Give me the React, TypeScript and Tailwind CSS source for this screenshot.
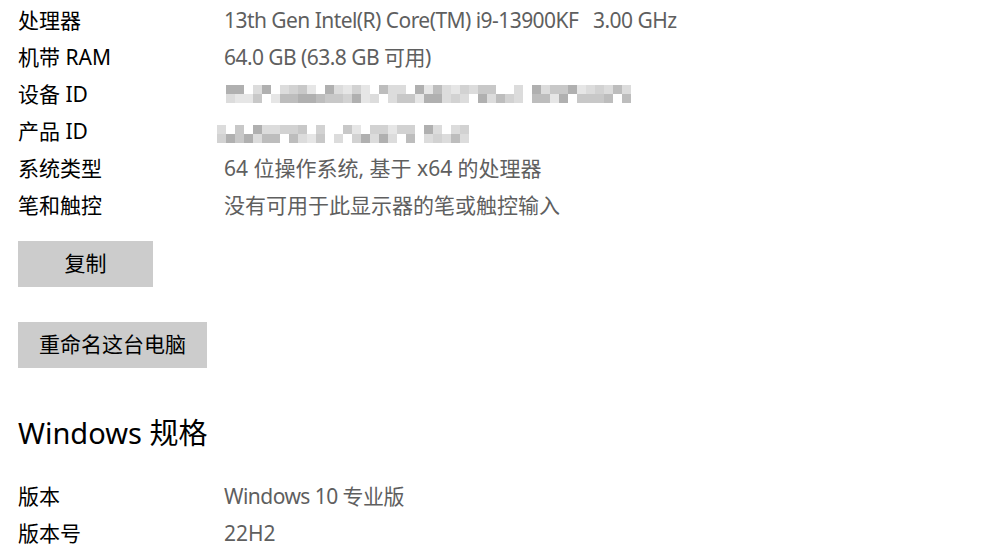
const FONT = { fontFamily: '"Noto Sans", "Noto Sans CJK SC", sans-serif' };

const SHADES = [
  "bg-[#f4f4f4]",
  "bg-[#e6e6e6]",
  "bg-[#dcdcdc]",
  "bg-[#d2d2d2]",
  "bg-[#c8c8c8]",
  "bg-[#bdbdbd]",
  "bg-[#b0b0b0]",
  "bg-[#a5a5a5]",
  "bg-white",
];

// pixelated (blurred) id values
function Mosaic({ cols, seed }: { cols: number; seed: number }) {
  const cells: string[] = [];
  let s = seed;
  for (let i = 0; i < cols * 2; i++) {
    s = (s * 9301 + 49297) % 233280;
    const r = s / 233280;
    const idx = r < 0.18 ? 8 : Math.floor(r * 7);
    cells.push(SHADES[idx]);
  }
  return (
    <div className="grid gap-0" style={{ gridTemplateColumns: `repeat(${cols}, 9px)` }}>
      {cells.map((c, i) => (
        <div key={i} className={`h-[9px] w-[9px] ${c}`} />
      ))}
    </div>
  );
}

function Row({ label, tight, children }: { label: string; tight?: boolean; children: React.ReactNode }) {
  return (
    <div className="flex h-[37px] items-center">
      <div className="w-[206px] shrink-0 text-black">{label}</div>
      <div className={tight ? "tracking-[-0.55px] text-[#5f5f5f]" : "text-[#5f5f5f]"}>{children}</div>
    </div>
  );
}

export default function App() {
  return (
    <div className="min-h-[552px] w-[988px] bg-white pl-[18px] pt-[2px] text-[21px]" style={FONT}>
      <Row label="处理器" tight>
        13th Gen Intel(R) Core(TM) i9-13900KF&nbsp;&nbsp;&nbsp;3.00 GHz
      </Row>
      <Row label="机带 RAM" tight>
        64.0 GB (63.8 GB 可用)
      </Row>
      <Row label="设备 ID">
        <div className="ml-[2px] mt-[-1px]">
          <Mosaic cols={45} seed={17} />
        </div>
      </Row>
      <Row label="产品 ID">
        <div className="ml-[-7px] mt-[4px]">
          <Mosaic cols={28} seed={53} />
        </div>
      </Row>
      <Row label="系统类型">64 位操作系统, 基于 x64 的处理器</Row>
      <Row label="笔和触控">没有可用于此显示器的笔或触控输入</Row>

      <div className="mt-[17px] flex flex-col items-start gap-[35px]">
        <button className="h-[46px] w-[135px] bg-[#cccccc] text-[21px] text-black">复制</button>
        <button className="h-[46px] w-[189px] bg-[#cccccc] text-[21px] text-black">重命名这台电脑</button>
      </div>

      <h2 className="mt-[40px] h-[50px] text-[29px] leading-[50px] text-black">Windows 规格</h2>

      <div className="mt-[20px]">
        <Row label="版本" tight>
          Windows 10 专业版
        </Row>
        <Row label="版本号">22H2</Row>
      </div>
    </div>
  );
}
